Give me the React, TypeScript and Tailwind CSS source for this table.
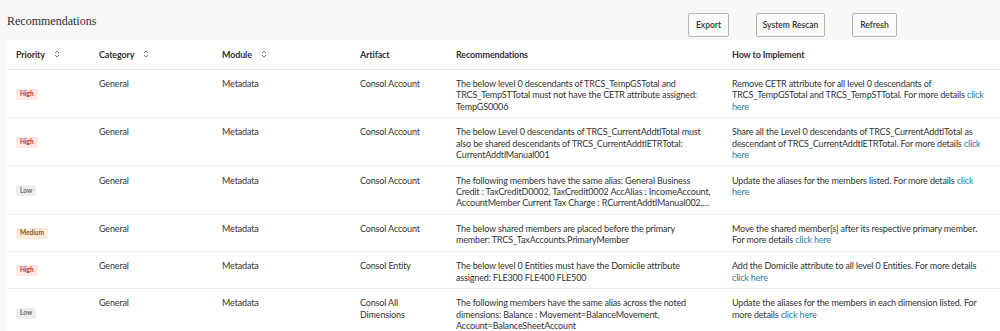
import React from "react";

type Priority = "High" | "Low" | "Medium";

const rows: {
  p: Priority;
  cat: string;
  mod: string;
  art: string;
  rec: React.ReactNode;
  how: string;
}[] = [
  {
    p: "High",
    cat: "General",
    mod: "Metadata",
    art: "Consol Account",
    rec: "The below level 0 descendants of TRCS_TempGSTotal and TRCS_TempSTTotal must not have the CETR attribute assigned: TempGS0006",
    how: "Remove CETR attribute for all level 0 descendants of TRCS_TempGSTotal and TRCS_TempSTTotal. For more details",
  },
  {
    p: "High",
    cat: "General",
    mod: "Metadata",
    art: "Consol Account",
    rec: "The below Level 0 descendants of TRCS_CurrentAddtlTotal must also be shared descendants of TRCS_CurrentAddtlETRTotal: CurrentAddtlManual001",
    how: "Share all the Level 0 descendants of TRCS_CurrentAddtlTotal as descendant of TRCS_CurrentAddtlETRTotal. For more details",
  },
  {
    p: "Low",
    cat: "General",
    mod: "Metadata",
    art: "Consol Account",
    rec: "The following members have the same alias: General Business Credit : TaxCreditD0002, TaxCredit0002 AccAlias : IncomeAccount, AccountMember Current Tax Charge : RCurrentAddtlManual002, RCurrentAddtlManual003",
    how: "Update the aliases for the members listed. For more details",
  },
  {
    p: "Medium",
    cat: "General",
    mod: "Metadata",
    art: "Consol Account",
    rec: (
      <>
        The below shared members are placed before the primary
        <br />
        member: TRCS_TaxAccounts.PrimaryMember
      </>
    ),
    how: "Move the shared member[s] after its respective primary member. For more details",
  },
  {
    p: "High",
    cat: "General",
    mod: "Metadata",
    art: "Consol Entity",
    rec: "The below level 0 Entities must have the Domicile attribute assigned: FLE300 FLE400 FLE500",
    how: "Add the Domicile attribute to all level 0 Entities. For more details",
  },
  {
    p: "Low",
    cat: "General",
    mod: "Metadata",
    art: "Consol All Dimensions",
    rec: "The following members have the same alias across the noted dimensions: Balance : Movement=BalanceMovement, Account=BalanceSheetAccount",
    how: "Update the aliases for the members in each dimension listed. For more details",
  },
];

function Badge({ p }: { p: Priority }) {
  const cls =
    p === "High"
      ? "bg-[#fde6e6] text-[#b8322a]"
      : p === "Medium"
      ? "bg-[#fdebd6] text-[#8a5414]"
      : "bg-[#ededed] text-[#6b6b6b]";
  return (
    <span
      className={`inline-flex h-[11px] items-center rounded-[2px] px-[4px] text-[6.5px] font-bold leading-none tracking-normal ${cls}`}
    >
      {p}
    </span>
  );
}

function SortIcon() {
  return (
    <svg width="6" height="8" viewBox="0 0 6 8" className="ml-[9px] inline-block">
      <path d="M1 3 L3 1 L5 3" fill="none" stroke="#666" strokeWidth="0.9" />
      <path d="M1 5 L3 7 L5 5" fill="none" stroke="#666" strokeWidth="0.9" />
    </svg>
  );
}

const buttons: { label: string; w: string }[] = [
  { label: "Export", w: "w-[41px]" },
  { label: "System Rescan", w: "w-[69px]" },
  { label: "Refresh", w: "w-[45px]" },
];

export default function App() {
  const font = { fontFamily: 'Lato, "Open Sans", sans-serif' };
  return (
    <div
      className="h-[331px] w-[1000px] overflow-hidden bg-[#f9f8f6] text-[#333]"
      style={font}
    >
      <div className="flex h-[40px] items-start">
        <h1
          className="ml-[7px] mt-[12px] text-[12px] leading-[18px] text-[#2f2f2f]"
          style={{ fontFamily: '"Liberation Serif", serif' }}
        >
          Recommendations
        </h1>
        <div className="ml-auto mr-[103px] mt-[13px] flex gap-[27px]">
          {buttons.map((b) => (
            <button
              key={b.label}
              className={`h-[24px] ${b.w} rounded-[2px] border border-[#b5b5b5] bg-[#fbfbfb] text-center text-[8.5px] font-semibold text-[#333]`}
            >
              {b.label}
            </button>
          ))}
        </div>
      </div>
      <div className="ml-[7px] bg-white">
        <table className="w-[993px] table-fixed border-collapse text-[9px] leading-[11.3px] tracking-[-0.15px]">
          <colgroup>
            <col className="w-[83px]" />
            <col className="w-[123px]" />
            <col className="w-[138px]" />
            <col className="w-[96px]" />
            <col className="w-[276px]" />
            <col className="w-[277px]" />
          </colgroup>
          <thead>
            <tr className="h-[29px] border-b border-[#e9e9e9] text-left">
              <th className="pl-[9px] font-bold">
                <span className="inline-flex items-center">Priority<SortIcon /></span>
              </th>
              <th className="pl-[9px] font-bold">
                <span className="inline-flex items-center">Category<SortIcon /></span>
              </th>
              <th className="pl-[9px] font-bold">
                <span className="inline-flex items-center">Module<SortIcon /></span>
              </th>
              <th className="pl-[9px] font-bold">Artifact</th>
              <th className="pl-[9px] font-bold">Recommendations</th>
              <th className="pl-[9px] font-bold">How to Implement</th>
            </tr>
          </thead>
          <tbody>
            {rows.map((r, i) => (
              <tr key={i} className="border-b border-[#ececec] align-top">
                <td className="pl-[9px] align-middle">
                  <Badge p={r.p} />
                </td>
                <td className="px-[9px] pb-[5px] pt-[8.5px]">{r.cat}</td>
                <td className="px-[9px] pb-[5px] pt-[8.5px]">{r.mod}</td>
                <td className="px-[9px] pb-[5px] pt-[8.5px]">{r.art}</td>
                <td className="px-[9px] pb-[5px] pt-[8.5px]">
                  <div className="line-clamp-3">{r.rec}</div>
                </td>
                <td className="pl-[9px] pr-[10px] pb-[5px] pt-[8.5px]">
                  {r.how}{" "}
                  <a className="text-[#2a7ca0]" href="#">
                    click here
                  </a>
                </td>
              </tr>
            ))}
          </tbody>
        </table>
      </div>
    </div>
  );
}
